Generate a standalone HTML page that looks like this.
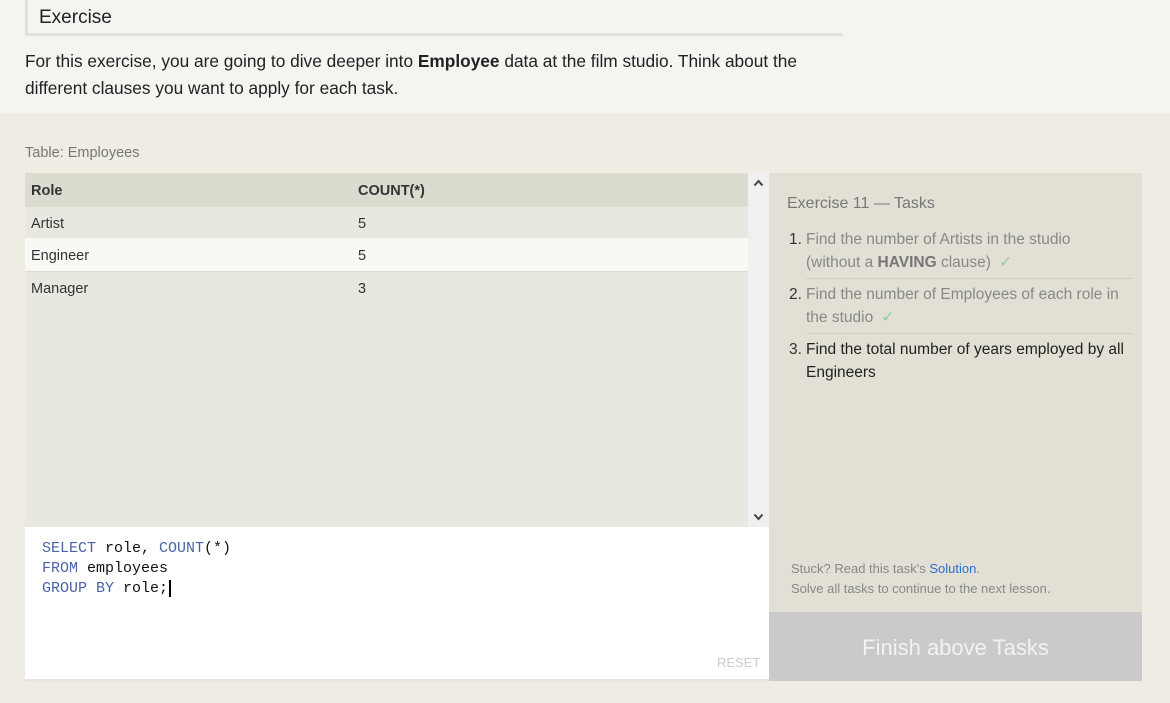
<!DOCTYPE html>
<html><head><style>
*{margin:0;padding:0;box-sizing:border-box}
body{width:1170px;height:703px;background:#efece4;font-family:"Liberation Sans",sans-serif;position:relative;overflow:hidden}
.top{position:absolute;left:0;top:0;width:1170px;height:113px;background:#f5f4f0}
.h{position:absolute;left:25px;top:0;width:818px;height:36px;border-left:3px solid #e4e2d8;border-bottom:3px solid #e4e2d8;font-size:19px;padding:7px 0 0 11px;color:#222}
.p{position:absolute;left:25px;top:48px;width:800px;font-size:17.3px;line-height:27px;color:#222}
.lbl{position:absolute;left:25px;top:145px;font-size:14.5px;color:#777}
.tbl{position:absolute;left:25px;top:173px;width:723px;height:354px;background:#e9e8e0}
.row{position:absolute;left:0;width:723px;height:32px;font-size:14.5px;color:#333}
.row span{position:absolute;top:8px}
.sb{position:absolute;left:748px;top:173px;width:21px;height:354px;background:#f0f0f0}
.sb svg{position:absolute;left:5px}
.ed{position:absolute;left:25px;top:527px;width:744px;height:154px;background:#fff;border-bottom:2px solid #e6e4dc}
.code{position:absolute;left:17px;top:12px;font-family:"Liberation Mono",monospace;font-size:15px;line-height:20px;color:#111}
.k{color:#4a62a8}
.rp{position:absolute;left:769px;top:173px;width:373px;height:439px;background:#e2dfd4}
.btn{position:absolute;left:769px;top:612px;width:373px;height:69px;background:#cacaca;color:#f2f2f2;font-size:22px;text-align:center;line-height:72px}
ol{position:absolute;left:37px;top:55px;width:327px;font-size:15.5px;line-height:23px;color:#888}
li{border-bottom:1px solid #d2cfc4;padding:0 0 4px 0;margin-bottom:4px;list-style:none;position:relative}
li b{color:#777}
.n{position:absolute;left:-17px;color:#333}
.ck{color:#8dcf99;margin-left:8px}
</style></head><body>
<div class="top"></div>
<div class="h">Exercise</div>
<div class="p">For this exercise, you are going to dive deeper into <b>Employee</b> data at the film studio. Think about the different clauses you want to apply for each task.</div>
<div class="lbl">Table: Employees</div>
<div class="tbl">
<div class="row" style="top:0;height:34px;background:#dcdbd0;font-weight:bold;color:#333"><span style="left:6px;top:10px">Role</span><span style="left:333px;top:10px">COUNT(*)</span></div>
<div class="row" style="top:34px;background:#e9e8e0;border-bottom:1px solid #f7f7f3"><span style="left:6px;top:9px">Artist</span><span style="left:333px;top:9px">5</span></div>
<div class="row" style="top:66px;background:#f8f8f5"><span style="left:6px;top:9px">Engineer</span><span style="left:333px;top:9px">5</span></div>
<div class="row" style="top:98px;background:#e9e8e0;border-top:1px solid #dcdbd0"><span style="left:6px;top:9px">Manager</span><span style="left:333px;top:9px">3</span></div>
</div>
<div class="sb"><svg style="top:6px" width="11" height="8" viewBox="0 0 11 8"><path d="M1.5 6.5 L5.5 2 L9.5 6.5" fill="none" stroke="#444" stroke-width="2"/></svg><svg style="top:340px" width="11" height="8" viewBox="0 0 11 8"><path d="M1.5 1.5 L5.5 6 L9.5 1.5" fill="none" stroke="#444" stroke-width="2"/></svg></div>
<div class="ed"><div class="code"><span class="k">SELECT</span> role, <span class="k">COUNT</span>(*)<br><span class="k">FROM</span> employees<br><span class="k">GROUP BY</span> role;<span style="border-left:2px solid #000;margin-left:1px"></span></div>
<div style="position:absolute;left:692px;top:128px;font-size:13px;color:#ccc">RESET</div></div>
<div class="rp">
<div style="position:absolute;left:18px;top:22px;font-size:16px;color:#777">Exercise 11 — Tasks</div>
<ol>
<li><span class="n">1.</span>Find the number of Artists in the studio<br>(without a <b>HAVING</b> clause)<span class="ck">✓</span></li>
<li><span class="n">2.</span>Find the number of Employees of each role in the studio<span class="ck">✓</span></li>
<li style="border:none;color:#222"><span class="n">3.</span>Find the total number of years employed by all Engineers</li>
</ol>
<div style="position:absolute;left:22px;top:386px;font-size:13px;line-height:20px;color:#888">Stuck? Read this task's <span style="color:#2b6fd0">Solution</span>.<br>Solve all tasks to continue to the next lesson.</div>
</div>
<div class="btn">Finish above Tasks</div>
</body></html>
